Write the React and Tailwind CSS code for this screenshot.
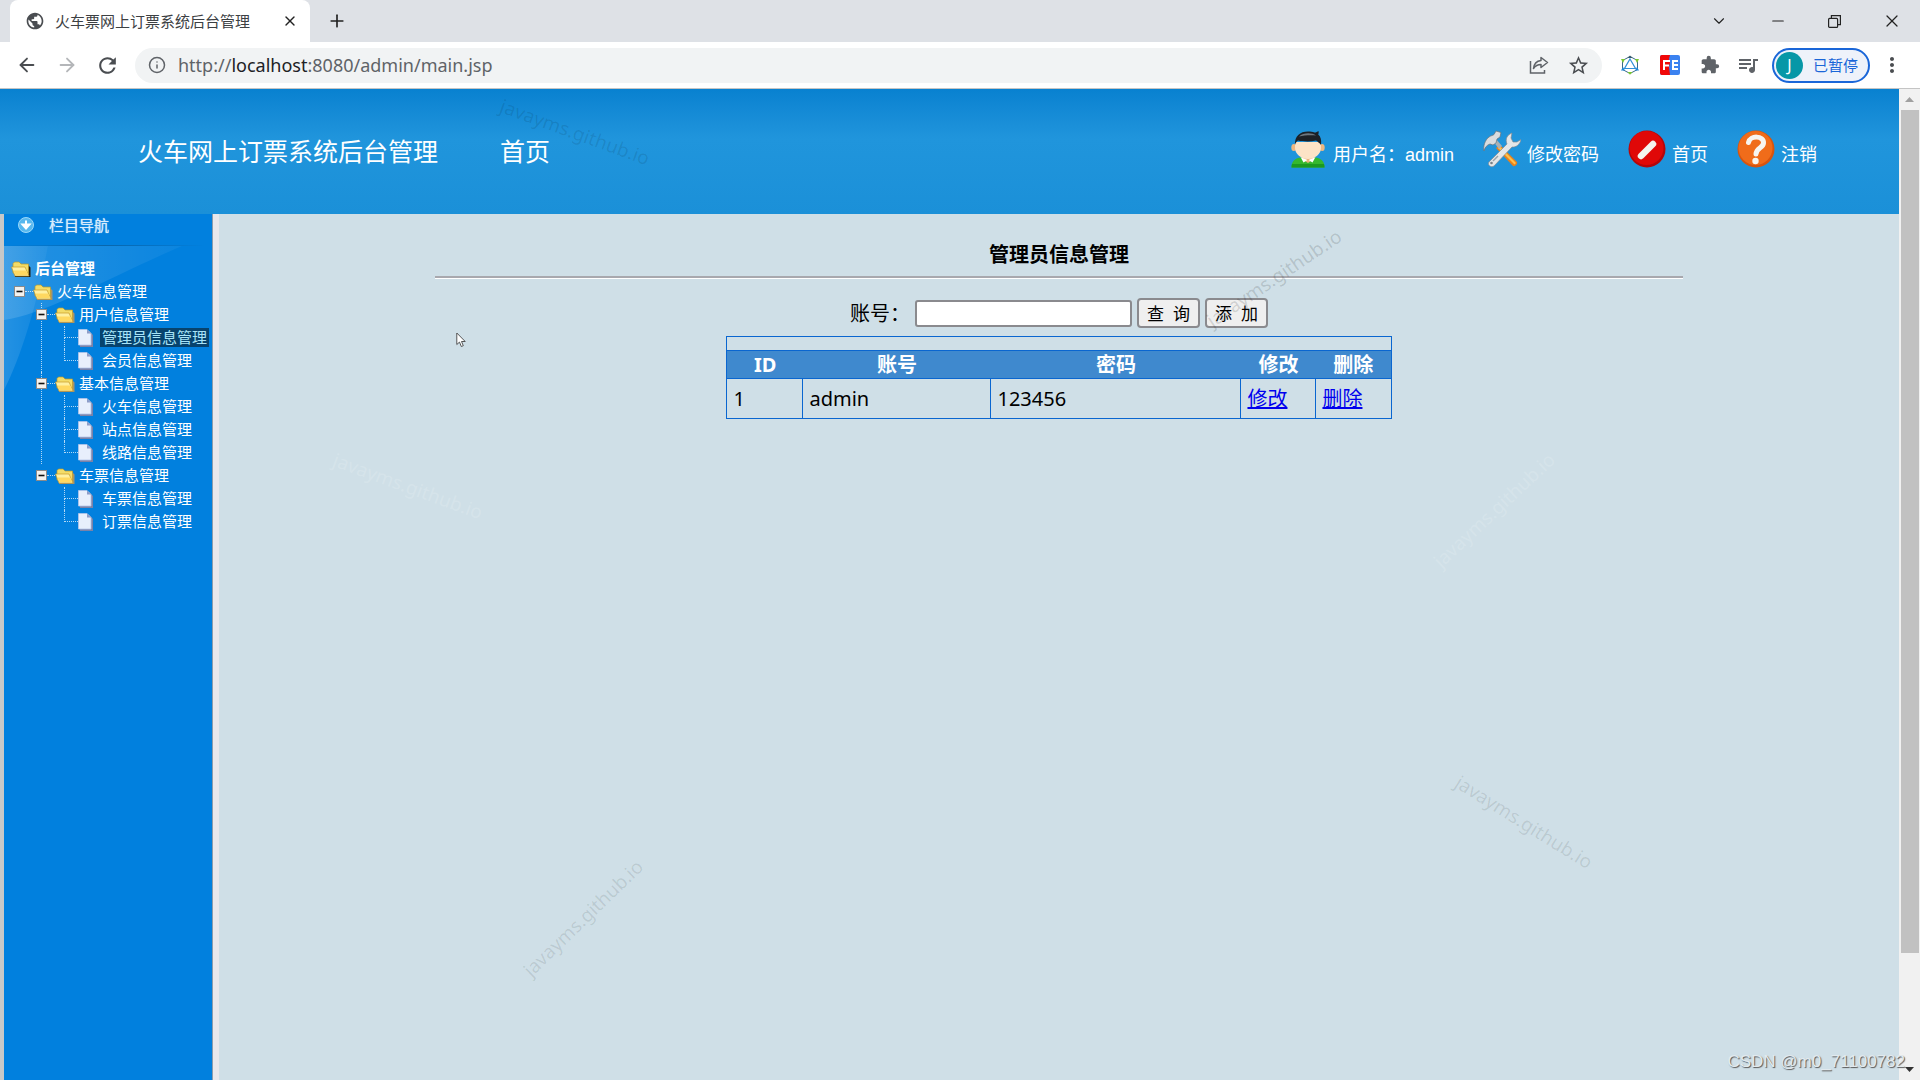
import React, { useState } from "react";
import { ArrowLeft, ArrowRight, X, Plus, Minus, ChevronDown, Info } from "lucide-react";
import { MdExtension, MdQueueMusic, MdMoreVert, MdRefresh, MdPublic, MdStarBorder } from "react-icons/md";

const menu = [
  {
    title: "用户信息管理",
    items: ["管理员信息管理", "会员信息管理"],
  },
  {
    title: "基本信息管理",
    items: ["火车信息管理", "站点信息管理", "线路信息管理"],
  },
  {
    title: "车票信息管理",
    items: ["车票信息管理", "订票信息管理"],
  },
];

const admins = [{ id: 1, name: "admin", password: "123456" }];

const watermarks = [
  "left-[495px] top-[120px] rotate-[20deg] text-black/10",
  "left-[1194px] top-[266px] -rotate-[34deg] text-black/15",
  "left-[328px] top-[474px] rotate-[20deg] text-white/15",
  "left-[1414px] top-[498px] -rotate-[43deg] text-white/15",
  "left-[503px] top-[906px] -rotate-[44deg] text-black/10",
  "left-[1444px] top-[810px] rotate-[32deg] text-black/10",
];

const ShareIcon = () => (
  <svg width="20" height="18" viewBox="0 0 20 18" fill="none" stroke="#5f6368" strokeWidth="1.5">
    <path d="M1.5 5v12h14v-3" />
    <path d="M12 1.5 18.5 6.5 12 11.5V8.5C8.500 8.500 6.500 9.500 4.500 12.500 5 8 7.500 5 12 4.500z" strokeLinejoin="round" />
  </svg>
);

const HexIcon = () => (
  <svg width="20" height="20" viewBox="0 0 20 20" fill="none">
    <path d="M10 1.500 17.500 5.500v9L10 18.500l-7.500-4v-9z" stroke="#3a6a8a" strokeWidth="1" />
    <path d="M10 4 15.500 13.500h-11z" stroke="#2f8fd8" strokeWidth="1.200" />
    <path d="M7.500 3 10 .5 12.500 3z" fill="#3a5a6a" />
    <path d="M1 4h4L3 8zM19 4h-4l2 4zM7.500 17h5L10 19.800z" fill="#7ac832" />
    <path d="M1 15.500 3 12l2 3.500zM19 15.500 17 12l-2 3.500z" fill="#1f88d8" />
  </svg>
);

const FeIcon = () => (
  <svg width="20" height="20" viewBox="0 0 20 20">
    <rect width="20" height="20" rx="2" fill="#3b82f0" />
    <path d="M2 0h8l-1 4 1 4-1 4 1 8H2a2 2 0 0 1-2-2V2a2 2 0 0 1 2-2z" fill="#f00808" />
    <path d="M4 15V6h6M4 10.500h5M18 6h-5v8h5M13 10h5" stroke="#fff" strokeWidth="2" fill="none" />
  </svg>
);

const RestoreIcon = () => (
  <svg width="13" height="13" viewBox="0 0 13 13" fill="none" stroke="#222" strokeWidth="1.2">
    <rect x=".6" y="3.400" width="9" height="9" rx="1" />
    <path d="M3.400 3V.6h9v9H10" />
  </svg>
);

const UserIcon = () => (
  <svg width="34" height="38" viewBox="0 0 34 38">
    <path d="M.5 37.500C.5 31 4 28.500 9 27.500h16c5 1 8.500 3.500 8.500 10z" fill="#35b82e" />
    <path d="M.5 37.500c0-1.500.2-2.500.6-3.500h31.800c.4 1 .6 2 .6 3.500z" fill="#1c9a20" />
    <path d="M11 26h12v3l-6 4-6-4z" fill="#eab27c" />
    <path d="M9.500 27 16.500 30 12.500 32.500zM24.500 27 17.500 30l4 2.500z" fill="#fff" />
    <ellipse cx="2.800" cy="17.500" rx="2.500" ry="3.500" fill="#f0b882" />
    <ellipse cx="31.200" cy="17.500" rx="2.500" ry="3.500" fill="#f0b882" />
    <path d="M4 12h26v6c0 6-6 11-13 11S4 24 4 18z" fill="#fde3c6" />
    <path d="M4 15C3.500 6 9 1.500 17 1.500c2.500 0 4.500.3 6.500 1 1.500 0 3-.7 4-1.500.3 1.500.2 2.500-.3 3.500C29.800 6.500 30.600 10 30 15c-1.500-2-3.500-3.500-5-4.500-6 1.500-13 1-18 0C5.500 11.500 4.500 13 4 15z" fill="#1c2026" />
    <path d="M8 6.500c4-4 13-4 17-1-5-.5-12-.2-17 1z" fill="#6d7780" />
  </svg>
);

const ToolsIcon = () => (
  <svg width="38" height="38" viewBox="0 0 38 38">
    <path d="M13 18 17 15 34 32c1 2-2 5-4 4z" fill="#e8821c" />
    <path d="M15 18l2-1.500L33 33l-1.500 1.500z" fill="#ffc04a" />
    <path d="M10 11l3-2 6 7-3 3z" fill="#aab0b4" />
    <path d="M1 21c-1-5 1-11 5-14 2-1.500 4-1.500 5-2.500L13 1l5 1.500-1 4.500-3 2-1 4-3 2-3-1c-3 1-5 3-6 7z" fill="#d9dcdf" stroke="#697178" strokeWidth=".7" />
    <path d="M24 14c-2-5 0-9 5-11l-1 5 2 4 4 0 4-2.500c-1 5-5 8-9 7.500L11 36c-3 2-7-1-5-4z" fill="#e4e6e8" stroke="#828a90" strokeWidth=".7" />
    <path d="M10 31l5-5" stroke="#9aa2a8" strokeWidth="1.500" />
    <circle cx="8.500" cy="33" r="1.300" fill="#788088" />
  </svg>
);

const HomeIcon = () => (
  <svg width="38" height="38" viewBox="0 0 38 38">
    <circle cx="19" cy="19" r="18.500" fill="#b5060a" />
    <circle cx="18.500" cy="18" r="17" fill="#e00808" />
    <path d="M13 26 25 14" stroke="#f5f5f0" strokeWidth="6.500" strokeLinecap="round" />
  </svg>
);

const LogoutIcon = () => (
  <svg width="38" height="38" viewBox="0 0 38 38" fill="none">
    <circle cx="19" cy="19" r="18.500" fill="#d8540e" />
    <circle cx="18.500" cy="18" r="17" fill="#f06c1a" />
    <path d="M11.500 12.500C13 5 27 5.500 26.500 13c-.3 5-7 4.500-7.500 11" stroke="#f7f5f0" strokeWidth="5" strokeLinecap="round" />
    <circle cx="18.500" cy="31" r="3.200" fill="#f7f5f0" />
  </svg>
);

const Folder = ({ dark }) => (
  <svg className="shrink-0" width="20" height="16" viewBox="0 0 20 16">
    <path d="M3 3h4l2 1.500h8.500l2 2V16H4z" fill={dark ? "#1c1c10" : "#a8946a"} />
    <path d="M2 12V2.500L3.500 1H8l2 2h7.500v10z" fill="#f3dc68" stroke="#b8982c" strokeWidth=".7" />
    <path d="M.5 6H14l4 9H4z" fill="#fff0a0" stroke="#c89c28" strokeWidth=".7" />
    <path d="M2.500 9.500h12.500l2 4.500H4.500z" fill="#ffd860" />
  </svg>
);

const Page = () => (
  <svg className="shrink-0" width="15" height="18" viewBox="0 0 15 18">
    <path d="M2 2h9l4 4v12H2z" fill="#7a82a8" />
    <path d="M.5.5h8.500l4 4V16H.5z" fill="#e8effc" stroke="#b4c4e8" strokeWidth=".8" />
    <path d="M9 .5V4.500h4z" fill="#8c9cc8" />
  </svg>
);

const Toggle = () => (
  <svg className="shrink-0" width="11" height="11" viewBox="0 0 11 11">
    <rect x=".5" y=".5" width="10" height="10" fill="#f4f2ee" stroke="#8a8a8a" />
    <path d="M2.500 5.500h6" stroke="#111" strokeWidth="1.600" />
  </svg>
);

const BrowserBar = () => (
  <div className="shrink-0 font-['Noto_Sans','Noto_Sans_CJK_SC',sans-serif]">
    <div className="flex h-[42px] items-center bg-[#dee1e6] pl-[10px]">
      <div className="flex h-full w-[300px] items-center rounded-t-lg bg-white pl-[15px] pr-3">
        <MdPublic size={20} color="#4a4d51" />
        <span className="ml-[10px] flex-1 whitespace-nowrap text-[15px] text-[#3c4043]">火车票网上订票系统后台管理</span>
        <button aria-label="关闭标签页"><X size={16} color="#222" /></button>
      </div>
      <button className="ml-[17px]" aria-label="新标签页"><Plus size={20} color="#222" /></button>
      <div className="ml-auto flex h-9 items-center gap-[41px] pr-[18px]">
        <button aria-label="搜索标签页"><ChevronDown size={18} strokeWidth={1.5} color="#222" /></button>
        <button aria-label="最小化"><Minus size={18} strokeWidth={1.5} color="#222" /></button>
        <button aria-label="还原"><RestoreIcon /></button>
        <button aria-label="关闭"><X size={20} strokeWidth={1.5} color="#222" /></button>
      </div>
    </div>
    <div className="flex h-[47px] items-center border-b border-[#c4c4c4] bg-white px-4">
      <button aria-label="后退"><ArrowLeft size={22} color="#4a4d51" /></button>
      <button className="ml-[18px]" aria-label="前进"><ArrowRight size={22} color="#b4b6b9" /></button>
      <button className="ml-[17px]" aria-label="刷新"><MdRefresh size={25} color="#4a4d51" /></button>
      <div className="ml-[15px] flex h-[35px] flex-1 items-center rounded-full bg-[#f1f3f4] pl-[13px] pr-3">
        <Info size={18} color="#5f6368" />
        <span className="ml-3 text-[18px] text-[#5f6368]">
          http://<span className="text-[#202124]">localhost</span>:8080/admin/main.jsp
        </span>
        <button className="ml-auto" aria-label="分享"><ShareIcon /></button>
        <button className="ml-[18px]" aria-label="收藏"><MdStarBorder size={23} color="#4a4d51" /></button>
      </div>
      <div className="ml-[18px] flex items-center gap-5">
        <HexIcon />
        <FeIcon />
        <MdExtension size={20} color="#5f6368" />
        <MdQueueMusic size={24} color="#5f6368" className="-ml-1" />
      </div>
      <button className="ml-3 flex h-[35px] w-[98px] items-center gap-[10px] rounded-full border-2 border-[#1a66d8] bg-[#eef2fa] pl-[2px] text-[15px] text-[#1a66d8]">
        <span className="flex h-[27px] w-[27px] items-center justify-center rounded-full bg-[#0797a7] text-base text-white">J</span>
        <span className="whitespace-nowrap">已暂停</span>
      </button>
      <button className="ml-[10px]" aria-label="更多"><MdMoreVert size={24} color="#4a4d51" /></button>
    </div>
  </div>
);

const Header = () => (
  <header className="flex h-[125px] shrink-0 items-center bg-linear-to-b from-[#0881d0] via-[#2095dc] via-40% to-[#1b90d8] pl-[138px] pr-[82px] text-white">
    <h1 className="text-[25px]">火车网上订票系统后台管理</h1>
    <a href="#home" className="ml-[62px] text-[25px]">首页</a>
    <div className="ml-auto flex items-center gap-[29px] pb-[5px] font-['Liberation_Sans','Noto_Sans_CJK_SC',sans-serif] text-[18px]">
      <span className="flex items-center gap-2"><UserIcon /><span className="pt-3">用户名：admin</span></span>
      <a href="#password" className="flex items-center gap-[6px]"><ToolsIcon /><span className="pt-3">修改密码</span></a>
      <a href="#index" className="flex items-center gap-[6px]"><HomeIcon /><span className="pt-3">首页</span></a>
      <a href="#logout" className="flex items-center gap-[6px]"><LogoutIcon /><span className="pt-3">注销</span></a>
    </div>
  </header>
);

const Sidebar = ({ active, onSelect }) => (
  <aside className="relative w-[219px] shrink-0 border-l-4 border-r-[6px] border-l-[#c8c8c8] border-r-[#e8e8ec] bg-[#0180de] text-[15px] text-white shadow-[inset_-1px_0_0_#8c9cac]">
    <svg className="absolute left-0 top-[31px]" width="180" height="150" viewBox="0 0 180 150">
      <defs>
        <linearGradient id="shine" x1="0" y1="0" x2="1" y2="0">
          <stop offset="0" stopColor="#fff" stopOpacity=".14" />
          <stop offset="1" stopColor="#fff" stopOpacity=".04" />
        </linearGradient>
      </defs>
      <path d="M0 0h180C110 30 40 70 0 75z" fill="url(#shine)" />
      <path d="M0 0h44C34 55 18 110 0 145z" fill="url(#shine)" />
    </svg>
    <div className="relative">
      <div className="flex h-[31px] items-center pb-[9px] pl-[14px]">
        <svg width="16" height="16" viewBox="0 0 16 16">
          <circle cx="8" cy="8" r="7.500" fill="#58b8ee" stroke="#9ad8fa" />
          <path d="M8 3.500v5M4.500 7.500 8 11.500l3.500-4z" stroke="#fff" strokeWidth="2" fill="#fff" />
        </svg>
        <span className="ml-[15px] text-[#d8ecfc] [text-shadow:0_0_1px_#d8ecfc]">栏目导航</span>
      </div>
      <div className="mr-2 h-px bg-linear-to-r from-[#0180de] via-[#0866ac] to-[#0180de]" />
      <nav className="pt-[11px] leading-[23px]">
        <div className="flex h-[23px] items-center gap-1 pl-[7px] font-bold"><Folder dark />后台管理</div>
        <div className="flex h-[23px] items-center pl-[10px]">
          <Toggle />
          <span className="w-2 border-t border-dotted border-white/70" />
          <Folder />
          <span className="ml-1">火车信息管理</span>
        </div>
        <ul className="ml-[37px]">
          {menu.map((group, index) => (
            <li key={group.title} className={index < menu.length - 1 ? "border-l border-dotted border-white/70" : "border-l border-transparent"}>
              <div className="-ml-[6px] flex h-[23px] items-center">
                <Toggle />
                <span className="w-2 border-t border-dotted border-white/70" />
                <Folder />
                <span className="ml-1">{group.title}</span>
              </div>
              <ul className="ml-[22px]">
                {group.items.map((item, i) => (
                  <li key={item} className="flex h-[23px] items-center">
                    <span className="flex h-full w-[14px] flex-col">
                      <span className="h-[12px] border-b border-l border-dotted border-white/70" />
                      {i < group.items.length - 1 && <span className="flex-1 border-l border-dotted border-white/70" />}
                    </span>
                    <Page />
                    <a
                      href="#menu"
                      onClick={() => onSelect(item)}
                      className={
                        active === item
                          ? "ml-[7px] h-[19px] whitespace-nowrap bg-[#07436e] px-[2px] leading-[19px] text-[#a8e4f8]"
                          : "ml-[7px] whitespace-nowrap px-[2px]"
                      }
                    >
                      {item}
                    </a>
                  </li>
                ))}
              </ul>
            </li>
          ))}
        </ul>
      </nav>
    </div>
  </aside>
);

const AdminList = () => {
  const [keyword, setKeyword] = useState("");

  return (
    <main className="min-w-0 flex-1 px-2 pt-[27px] text-[20px] text-black">
      <h2 className="text-center font-bold leading-[28px]">管理员信息管理</h2>
      <hr className="mx-auto mt-[7px] h-[3px] w-3/4 border-b border-t-2 border-b-white border-t-[#a8a8ae]" />
      <form className="mt-[18px] flex items-center justify-center" onSubmit={(e) => e.preventDefault()}>
        <label htmlFor="keyword" className="pt-[2px]">账号：</label>
        <input
          id="keyword"
          type="text"
          value={keyword}
          onChange={(e) => setKeyword(e.target.value)}
          className="ml-[5px] h-[27px] w-[217px] rounded-[3px] border-2 border-[#8a8a8e] bg-white px-1 text-base"
        />
        <button type="submit" className="ml-[5px] h-[30px] w-[63px] whitespace-pre rounded-[4px] border-2 border-[#8a8a8e] bg-[#efefef] text-[17px] leading-none">{"查  询"}</button>
        <button type="button" className="ml-[5px] h-[30px] w-[63px] whitespace-pre rounded-[4px] border-2 border-[#8a8a8e] bg-[#efefef] text-[17px] leading-none">{"添  加"}</button>
      </form>
      <table className="mx-auto mt-[7px] w-[665px] table-fixed border-collapse border border-[#0a66d0]">
        <colgroup>
          <col className="w-[76px]" />
          <col className="w-[188px]" />
          <col className="w-[250px]" />
          <col className="w-[75px]" />
          <col className="w-[75px]" />
        </colgroup>
        <thead>
          <tr className="h-[14px]">
            <td colSpan={5} className="border border-[#0a66d0]" />
          </tr>
          <tr className="h-7 bg-[#3f89ce] leading-[26px] text-white">
            <th>ID</th>
            <th>账号</th>
            <th>密码</th>
            <th>修改</th>
            <th>删除</th>
          </tr>
        </thead>
        <tbody>
          {admins.map((admin) => (
            <tr key={admin.id} className="h-10">
              <td className="border border-[#0a66d0] px-[6px]">{admin.id}</td>
              <td className="border border-[#0a66d0] px-[6px]">{admin.name}</td>
              <td className="border border-[#0a66d0] px-[6px]">{admin.password}</td>
              <td className="border border-[#0a66d0] px-[6px]"><a href="#edit" className="text-[#0000ee] underline">修改</a></td>
              <td className="border border-[#0a66d0] px-[6px]"><a href="#delete" className="text-[#0000ee] underline">删除</a></td>
            </tr>
          ))}
        </tbody>
      </table>
    </main>
  );
};

const Scrollbar = () => (
  <div className="flex w-[21px] shrink-0 flex-col items-center bg-[#f1f1f1]">
    <svg className="my-[7px] shrink-0" width="9" height="7" viewBox="0 0 9 7"><path d="M0 6h9L4.500 1z" fill="#a0a0a0" /></svg>
    <div className="w-[18px] flex-[846] bg-[#c1c1c1]" />
    <div className="flex-[107]" />
    <svg className="my-[7px] shrink-0" width="9" height="6" viewBox="0 0 9 6"><path d="M0 0h9L4.500 5z" fill="#333" /></svg>
  </div>
);

const App = () => {
  const [active, setActive] = useState("管理员信息管理");

  return (
    <div className="relative flex h-screen flex-col overflow-hidden bg-[#cfdfe7] font-['Noto_Sans','Noto_Sans_CJK_SC',sans-serif]">
      <BrowserBar />
      <div className="flex min-h-0 flex-1">
        <div className="flex min-w-0 flex-1 flex-col">
          <Header />
          <div className="flex flex-1">
            <Sidebar active={active} onSelect={setActive} />
            <AdminList />
          </div>
        </div>
        <Scrollbar />
      </div>

      {/* watermarks and mouse pointer */}
      {watermarks.map((place) => (
        <span key={place} className={`pointer-events-none absolute w-[160px] text-center text-[19px] leading-6 ${place}`}>
          javayms.github.io
        </span>
      ))}
      <svg className="absolute left-[456px] top-[332px]" width="10" height="16" viewBox="0 0 10 16">
        <path d="M.8 1v11.500l2.700-2.400 1.800 4.400 2-.8-1.800-4.200h3.700z" fill="#fff" stroke="#444" strokeWidth=".9" />
      </svg>
      <span className="pointer-events-none absolute bottom-[6px] right-[15px] font-['Liberation_Sans',sans-serif] text-[17px] text-[#e2eaee] [text-shadow:1px_1px_1px_#555]">
        CSDN @m0_71100782
      </span>
    </div>
  );
};

export default App;
